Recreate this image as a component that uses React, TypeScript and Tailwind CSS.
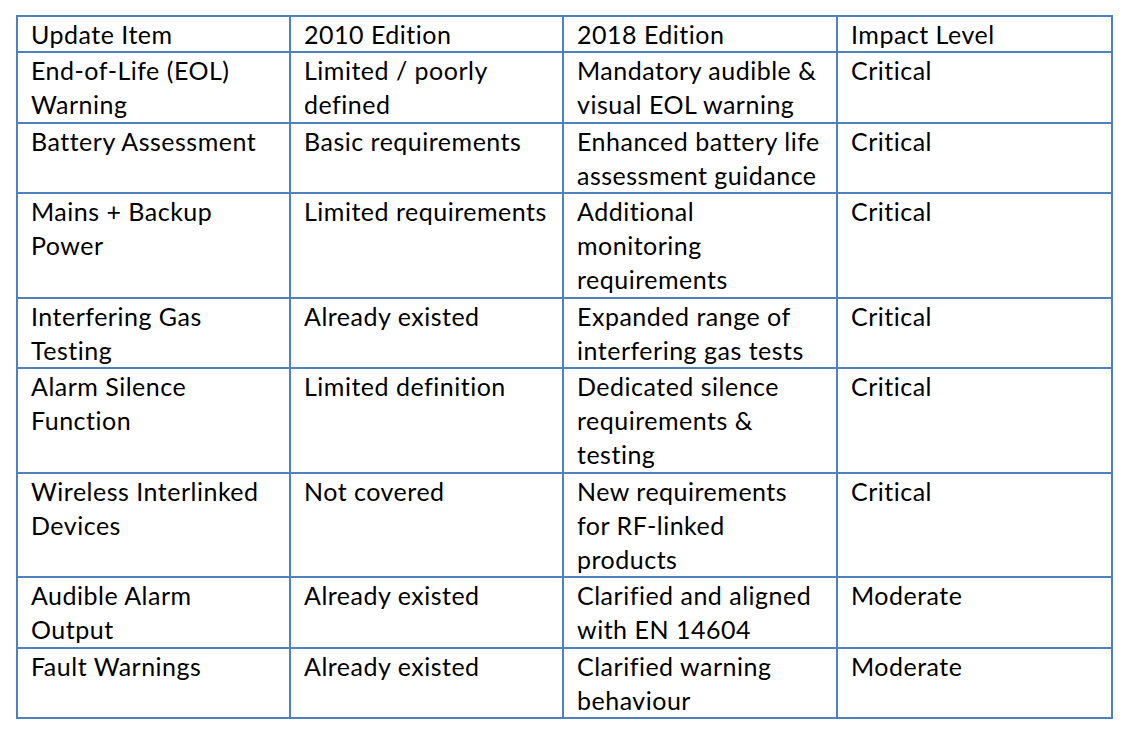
const rows: string[][][] = [
  [['End-of-Life (EOL)', 'Warning'], ['Limited / poorly', 'defined'], ['Mandatory audible &', 'visual EOL warning'], ['Critical']],
  [['Battery Assessment'], ['Basic requirements'], ['Enhanced battery life', 'assessment guidance'], ['Critical']],
  [['Mains + Backup', 'Power'], ['Limited requirements'], ['Additional', 'monitoring', 'requirements'], ['Critical']],
  [['Interfering Gas', 'Testing'], ['Already existed'], ['Expanded range of', 'interfering gas tests'], ['Critical']],
  [['Alarm Silence', 'Function'], ['Limited definition'], ['Dedicated silence', 'requirements &', 'testing'], ['Critical']],
  [['Wireless Interlinked', 'Devices'], ['Not covered'], ['New requirements', 'for RF-linked', 'products'], ['Critical']],
  [['Audible Alarm', 'Output'], ['Already existed'], ['Clarified and aligned', 'with EN 14604'], ['Moderate']],
  [['Fault Warnings'], ['Already existed'], ['Clarified warning', 'behaviour'], ['Moderate']],
];

const headers = ['Update Item', '2010 Edition', '2018 Edition', 'Impact Level'];

const cellClass =
  'border-2 border-[#4f81bd] pl-[13px] pr-1 py-0 align-top text-left font-normal whitespace-nowrap';

const App = () => {
  return (
    <div className="w-[1124px] h-[737px] bg-white pl-[16px] pt-[15px] font-['Lato',sans-serif] text-[25px] tracking-[0.5px] leading-[34.2px] text-black">
      <table className="w-[1095px] table-fixed border-collapse">
        <colgroup>
          <col className="w-[273px]" />
          <col className="w-[273px]" />
          <col className="w-[274px]" />
          <col className="w-[275px]" />
        </colgroup>
        <thead>
          <tr>
            {headers.map((h) => (
              <th key={h} className={cellClass}>
                {h}
              </th>
            ))}
          </tr>
        </thead>
        <tbody>
          {rows.map((row, i) => (
            <tr key={i}>
              {row.map((lines, j) => (
                <td key={j} className={cellClass}>
                  {lines.map((l, k) => (
                    <div key={k}>{l}</div>
                  ))}
                </td>
              ))}
            </tr>
          ))}
        </tbody>
      </table>
    </div>
  );
};

export default App;
